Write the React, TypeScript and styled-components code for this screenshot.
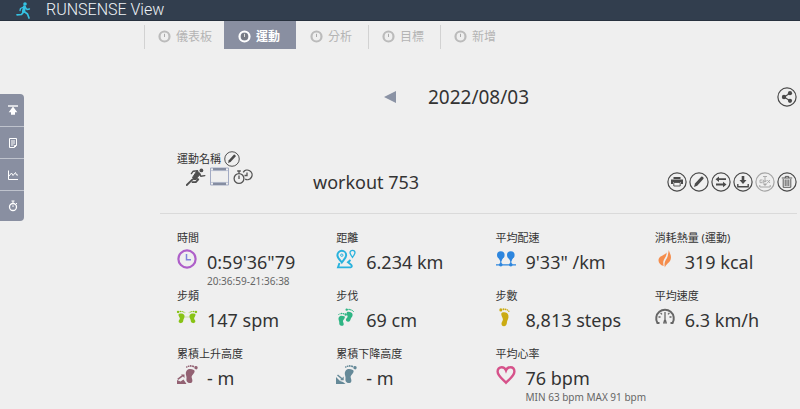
import React from 'react';
import styled, { createGlobalStyle } from 'styled-components';

const GlobalStyle = createGlobalStyle`
  * { box-sizing: border-box; }
  body {
    margin: 0;
    background: #efefef;
    color: #333;
    font-family: "Noto Sans", "Noto Sans CJK TC", sans-serif;
  }
  button { border: 0; padding: 0; background: none; font: inherit; color: inherit; cursor: pointer; }
  svg { display: block; flex: none; }
`;

const Header = styled.header`
  display: flex;
  align-items: center;
  gap: 14px;
  height: 21px;
  padding-left: 16px;
  background: #323e4e;
  border-bottom: 1px solid #27313e;
`;

const Brand = styled.span`
  font: 300 16px/20px Roboto, sans-serif;
  color: #eef2f6;
`;

const Nav = styled.nav`
  display: flex;
  height: 28px;
  margin-left: 144px;
`;

const Tab = styled.a<{ $active?: boolean; $divided?: boolean }>`
  position: relative;
  display: flex;
  align-items: center;
  gap: 5px;
  min-width: 72px;
  padding: 3px 12px 0 14px;
  font-size: 12px;
  line-height: 16px;
  font-weight: ${p => (p.$active ? 700 : 400)};
  text-decoration: none;
  white-space: nowrap;
  color: ${p => (p.$active ? '#fff' : '#b4b4b4')};
  background: ${p => (p.$active ? '#898fa1' : 'transparent')};
  &::before {
    content: '';
    display: ${p => (p.$divided ? 'block' : 'none')};
    position: absolute;
    left: 0;
    top: 4px;
    bottom: 0;
    width: 1px;
    background: #d2d2d2;
  }
`;

const Body = styled.div`
  display: flex;
  align-items: flex-start;
`;

const Sidebar = styled.aside`
  flex: none;
  display: flex;
  flex-direction: column;
  width: 24px;
  margin-top: 45px;
  background: #898fa1;
  border-radius: 0 4px 4px 0;
`;

const SideButton = styled.button`
  display: flex;
  align-items: center;
  justify-content: center;
  height: 32px;
  padding-left: 2px;
  color: #fff;
  & + & { border-top: 1px solid #bfc3cd; }
  &:last-child { height: 31px; }
`;

const Main = styled.main`
  flex: 1;
  min-width: 0;
  margin: 32px 3px 0 136px;
`;

const DateRow = styled.div`
  display: grid;
  grid-template-columns: 1fr auto 1fr;
  align-items: center;
  column-gap: 32px;
  height: 32px;
`;

const PrevButton = styled.button`
  justify-self: end;
  color: #8b93a5;
`;

const DateText = styled.time`
  font-size: 19px;
  line-height: 24px;
`;

const RoundButton = styled.button<{ $faded?: boolean }>`
  display: block;
  color: ${p => (p.$faded ? '#a5a5a5' : '#4a4a4a')};
  justify-self: end;
`;

const TitleRow = styled.div`
  display: flex;
  align-items: flex-end;
  height: 101px;
  padding: 0 0 21px 17px;
  border-bottom: 1px solid #dadada;
`;

const NameBlock = styled.div`
  display: flex;
  flex-direction: column;
  width: 136px;
  padding-bottom: 6px;
`;

const NameLabel = styled.div`
  display: flex;
  align-items: center;
  gap: 3px;
  font-size: 11px;
  line-height: 16px;
`;

const KindIcons = styled.div`
  display: flex;
  align-items: center;
  gap: 4px;
  padding-left: 9px;
`;

const WorkoutName = styled.h1`
  margin: 0;
  flex: 1;
  font-size: 18px;
  line-height: 20px;
  font-weight: 400;
`;

const Actions = styled.div`
  display: flex;
  gap: 2px;
`;

const Stats = styled.section`
  display: grid;
  grid-template-columns: repeat(4, minmax(0, 1fr));
  padding-top: 16px;
`;

const Stat = styled.div`
  height: 58px;
  padding-left: 17px;
  white-space: nowrap;
`;

const StatLabel = styled.div`
  font-size: 11px;
  line-height: 16px;
`;

const StatLine = styled.div`
  display: flex;
  gap: 10px;
`;

const StatIcon = styled.svg`
  margin-top: 3px;
  overflow: visible;
`;

const StatValue = styled.div`
  padding-top: 4px;
  font-size: 18px;
  line-height: 24px;
`;

const StatNote = styled.div`
  font-size: 10px;
  line-height: 14px;
  color: #666;
`;

const Runner = () => (
  <svg width="16" height="18" viewBox="0 0 16 18" fill="none" stroke="#35c3e3" strokeLinecap="round" strokeLinejoin="round">
    <circle cx="9" cy="3" r="1.8" fill="#35c3e3" stroke="none" />
    <path d="M8.5 6 L7.5 10.5" strokeWidth="3.2" />
    <path d="M7.5 6 L4.5 7.5 L4 9.5 M9.5 6.5 L11 8.5 L13.5 8" strokeWidth="1.3" />
    <path d="M7.5 11 L5.5 13.5 L1 13.8 M8.5 10.8 L11.5 13 L13 17" strokeWidth="1.7" />
  </svg>
);

const Dial = ({ active }: { active?: boolean }) => (
  <svg width="13" height="13" viewBox="0 0 13 13" fill="none">
    <circle cx="6.5" cy="6.5" r="5" stroke={active ? '#fff' : '#bbb'} strokeWidth="2.2" />
    {active && <circle cx="6.5" cy="6.5" r="3.5" fill="#777b84" />}
    <path d="M6.5 3.8V7" stroke={active ? '#ddd' : '#aaa'} strokeWidth="1" />
  </svg>
);

const SideIcon = ({ kind }: { kind: string }) => (
  <svg width="12" height="12" viewBox="0 0 12 12" fill="none" stroke="currentColor" strokeWidth="1">
    {kind === 'top' && (
      <>
        <path d="M1 2H11" strokeWidth="1.4" />
        <path d="M6 2.5L10.3 8.3H8V10.8H4V8.3H1.7Z" fill="currentColor" stroke="none" />
      </>
    )}
    {kind === 'note' && <path d="M2.5 1.5H9.5V8.5L7.5 10.5H2.5ZM4 4H8M4 6H8M4 8H6.5M7.5 10V8.5H9.5" />}
    {kind === 'chart' && <path d="M1.5 1.5V10.5H11M2 7L4.5 4L6 6.5L8.5 3.5L9.5 6H11" />}
    {kind === 'watch' && (
      <>
        <circle cx="6" cy="7" r="3.5" strokeWidth="1.3" />
        <path d="M6 7V5.2M4.5 1H7.5M6 1V3.5M9 3L10 4" />
      </>
    )}
  </svg>
);

const glyphs: Record<string, React.ReactNode> = {
  share: (
    <g fill="currentColor">
      <circle cx="7" cy="10" r="2.2" />
      <circle cx="13" cy="6.2" r="2.1" />
      <circle cx="13" cy="13.8" r="2.1" />
      <path d="M13 6.2L7 10L13 13.8" fill="none" stroke="currentColor" strokeWidth="1.1" />
    </g>
  ),
  print: (
    <g fill="currentColor">
      <path d="M6.5 5H13.5V7H6.5ZM4 7.5H16V12H14V10H6V12H4Z" />
      <path d="M6.8 10.5H13.2V14H6.8Z" fill="#efefef" stroke="currentColor" strokeWidth=".9" />
    </g>
  ),
  edit: (
    <path d="M5 15L6 11.5L12.2 4.8Q13 4 14 5Q15 6 14.5 6.8L8.2 13.7Z" fill="currentColor" />
  ),
  swap: (
    <g fill="currentColor">
      <path d="M4.5 7.2L8 4.5V6.3H15V8.1H8V9.9Z" />
      <path d="M15.5 12.5L12 9.8V11.6H5V13.4H12V15.2Z" />
    </g>
  ),
  download: (
    <g fill="currentColor">
      <path d="M8.7 4H11.3V8H13.5L10 12L6.5 8H8.7Z" />
      <path d="M4.8 12V14.7H15.2V12" fill="none" stroke="currentColor" strokeWidth="1.4" />
    </g>
  ),
  gpx: (
    <g fill="currentColor">
      <path d="M8 4.5H12M10 4.5V7M7.5 8H5V10.7H7.2V9.4M8.7 11V8H11V9.6H9M12.3 8L15 11M15 8L12.3 11" fill="none" stroke="currentColor" strokeWidth=".9" />
      <path d="M7.5 11.5H12.5L10 14Z" />
      <path d="M4.8 13V15H15.2V13" fill="none" stroke="currentColor" strokeWidth="1" />
    </g>
  ),
  trash: (
    <path
      d="M4.8 6H15.2M8.3 6V4.4H11.7V6M6.2 7V15.3H13.8V7M8.2 7.5V14M10 7.5V14M11.8 7.5V14"
      fill="none"
      stroke="currentColor"
      strokeWidth=".9"
    />
  ),
};

const RoundIcon = ({ name, size = 20 }: { name: string; size?: number }) => (
  <svg width={size} height={size} viewBox="0 0 20 20">
    <circle cx="10" cy="10" r="9.1" fill="none" stroke="currentColor" strokeWidth="1.2" />
    {glyphs[name]}
  </svg>
);

const Sprinter = () => (
  <svg width="20" height="18" viewBox="0 0 20 18" fill="none" stroke="#4f4f4f" strokeLinecap="round" strokeLinejoin="round">
    <circle cx="15.4" cy="2.4" r="1.9" fill="#4f4f4f" stroke="none" />
    <path d="M12.5 4L10.8 3L6.5 9.5L9 12L14 6.5Z" fill="#4f4f4f" strokeWidth="1" />
    <path d="M11.5 2.8L7.2 3.2L5.4 5.6M13.5 5.5L14.8 8.3L18.8 7.6" strokeWidth="1.4" />
    <path d="M8 10.5L5.5 12.3L.8 17M8.5 10L12.3 11.3L9.8 14.2L6.5 14.2" strokeWidth="1.8" />
  </svg>
);

const Film = () => (
  <svg width="19" height="19" viewBox="0 0 19 19">
    <path d="M.5 1H18.5V18H.5Z" fill="none" stroke="#a3abc4" strokeWidth="1" />
    <path d="M3 1H16V3.6H3ZM3 15.4H16V18H3Z" fill="#858da1" />
    <path d="M1 3.6H18M1 15.4H18" stroke="#a3abc4" strokeWidth=".6" />
  </svg>
);

const Timers = () => (
  <svg width="20" height="18" viewBox="0 0 20 18" fill="none" stroke="#555" strokeWidth="1.3">
    <circle cx="6" cy="10.5" r="4.9" />
    <path d="M6 7.5V11M4.2 3H7.8M6 3V5.5" />
    <path d="M10.2 4.3A4.8 4.8 0 1 1 12.2 11.2" />
    <path d="M14 4.5V7.5H11.5" />
  </svg>
);

const footSole =
  'M6.2 5.6C8.8 4.8 11.8 5.4 12.4 8.4C13 11.3 11.3 12.6 11 14.8C10.8 17.2 10.4 19.2 8.2 19.3C5.8 19.4 5 17.5 5.7 15.6C6.4 13.8 7.3 13 6.7 11.4C6 9.8 4.2 6.4 6.2 5.6Z';

const Foot = () => (
  <g>
    <path d={footSole} />
    <ellipse cx="4.8" cy="2.9" rx="1.5" ry="1.7" />
    <circle cx="7.5" cy="2.2" r="1" />
    <circle cx="9.6" cy="2.3" r=".9" />
    <circle cx="11.4" cy="3" r=".8" />
    <circle cx="12.8" cy="4.2" r=".7" />
  </g>
);

const statGlyphs: Record<string, React.ReactNode> = {
  time: (
    <g fill="none" stroke="#ae5fc9">
      <circle cx="10" cy="10" r="8.6" strokeWidth="2.2" />
      <path d="M9.5 5V10.8H14" stroke="#7f83dc" strokeWidth="1.5" />
    </g>
  ),
  distance: (
    <g fill="none" stroke="#29b2dd">
      <path d="M5.8 13.5C3.5 10.5 1.4 8.6 1.4 6.2A4.4 4.4 0 0 1 10.2 6.2C10.2 8.6 8 10.5 5.8 13.5Z" strokeWidth="2" />
      <circle cx="5.8" cy="6.2" r="1.2" strokeWidth="1" />
      <path d="M16.5 8.3C15 6.3 14 5 14 3.8A2.5 2.5 0 0 1 19 3.8C19 5 18 6.3 16.5 8.3Z" strokeWidth="1.3" />
      <path d="M3.5 14L2 18.4H14.5Q17 17.5 14.8 15.5L12 13.3L14.5 11" strokeWidth="1.9" />
    </g>
  ),
  pace: (
    <g fill="#2d86de">
      <circle cx="4.8" cy="6" r="3.8" />
      <circle cx="14.8" cy="6" r="3.8" />
      <path d="M2 8H7.6L5.4 12H4.2ZM12 8H17.6L15.4 12H14.2Z" />
      <path d="M4.8 9V16M14.8 9V16M0 15.8H20" stroke="#2d86de" strokeWidth="1.2" />
      <circle cx="4.8" cy="15.8" r="1.8" />
      <circle cx="14.8" cy="15.8" r="1.8" />
    </g>
  ),
  energy: (
    <g fill="#f58d4c">
      <path d="M13.8 1C14.5 4 17 6.5 15.5 11C14.3 14 11 15 9.9 18.5C9 15.5 9.7 12 11.7 9.5C13 7.5 13.2 4 13.8 1Z" />
      <path d="M11.6 3.5C11.8 8 8.8 9.5 8.3 12.5C8.1 14 8.3 15.5 8.7 17C4.5 15.7 2.5 12.5 4 9.2C5.5 6.5 9.5 6.5 11.6 3.5Z" />
    </g>
  ),
  cadence: (
    <g fill="#88c316">
      <g transform="translate(-3 3) scale(.85 .68)"><Foot /></g>
      <g transform="translate(23 3) scale(-.85 .68)"><Foot /></g>
      <path d="M8.5 10H12.5" stroke="#a9d45a" strokeWidth="1" strokeDasharray="1 1" />
    </g>
  ),
  stride: (
    <g fill="#2fb584">
      <g transform="translate(14 6) rotate(8) scale(-.85 .72)"><Foot /></g>
      <g transform="translate(7 0) rotate(8) scale(.85 .72)"><Foot /></g>
    </g>
  ),
  steps: (
    <g fill="#cbab12"><Foot /></g>
  ),
  speed: (
    <g fill="none" stroke="#666" strokeWidth="2">
      <path d="M4.5 16H2.4A8.8 8.8 0 1 1 17.6 16H15.5" />
      <path d="M10 5V13M8 15.8H12M3.5 10H5.5M14.5 10H16.5M5.6 6L7 7.4M14.4 6L13 7.4" strokeWidth="1.3" />
      <circle cx="10" cy="14.2" r="1.4" fill="#666" stroke="none" />
    </g>
  ),
  ascent: (
    <g fill="#936273">
      <g transform="translate(25 1) rotate(12) scale(-1.15 1)"><Foot /></g>
      <path d="M0 19V15L3.5 16.5L6.5 14.5L9.5 19Z" />
      <path d="M.7 14.3L6 10.3" fill="none" stroke="#936273" strokeWidth="1.5" />
      <path d="M4 9.5H7.5V13Z" />
    </g>
  ),
  descent: (
    <g fill="#658998">
      <g transform="translate(25 1) rotate(12) scale(-1.15 1)"><Foot /></g>
      <path d="M0 19V12L4 16L7 17L9.5 19Z" />
      <path d="M1.5 10L6 13.8" fill="none" stroke="#658998" strokeWidth="1.5" />
      <path d="M7.7 11.5V15.3H4Z" />
    </g>
  ),
  heart: (
    <path
      d="M10 17.8C7 14.5 1.6 11 1.6 6.6C1.6 3.8 3.4 2.2 5.6 2.2C7.6 2.2 9.2 3.4 10 5.4C10.8 3.4 12.4 2.2 14.4 2.2C16.6 2.2 18.4 3.8 18.4 6.6C18.4 11 13 14.5 10 17.8Z"
      fill="none"
      stroke="#d6528a"
      strokeWidth="2.4"
    />
  ),
};

const stats = [
  { icon: 'time', label: '時間', value: '0:59\'36"79', note: '20:36:59-21:36:38' },
  { icon: 'distance', label: '距離', value: '6.234 km' },
  { icon: 'pace', label: '平均配速', value: '9\'33" /km' },
  { icon: 'energy', label: '消耗熱量 (運動)', value: '319 kcal' },
  { icon: 'cadence', label: '步頻', value: '147 spm' },
  { icon: 'stride', label: '步伐', value: '69 cm' },
  { icon: 'steps', label: '步數', value: '8,813 steps' },
  { icon: 'speed', label: '平均速度', value: '6.3 km/h' },
  { icon: 'ascent', label: '累積上升高度', value: '- m' },
  { icon: 'descent', label: '累積下降高度', value: '- m' },
  { icon: 'heart', label: '平均心率', value: '76 bpm', note: 'MIN 63 bpm MAX 91 bpm' },
];

const tabs = [
  { text: '儀表板', divided: true },
  { text: '運動', active: true },
  { text: '分析' },
  { text: '目標', divided: true },
  { text: '新增', divided: true },
];

const sideItems = [
  { kind: 'top', label: '回到頂端' },
  { kind: 'note', label: '筆記' },
  { kind: 'chart', label: '圖表' },
  { kind: 'watch', label: '計時' },
];

const actions = [
  { name: 'print', label: '列印' },
  { name: 'edit', label: '編輯' },
  { name: 'swap', label: '切換' },
  { name: 'download', label: '下載' },
  { name: 'gpx', label: '下載 GPX', faded: true },
  { name: 'trash', label: '刪除' },
];

export default function App() {
  return (
    <>
      <GlobalStyle />
      <Header>
        <Runner />
        <Brand>RUNSENSE View</Brand>
      </Header>
      <Nav>
        {tabs.map(t => (
          <Tab key={t.text} href="#" $active={t.active} $divided={t.divided}>
            <Dial active={t.active} />
            {t.text}
          </Tab>
        ))}
      </Nav>
      <Body>
        <Sidebar>
          {sideItems.map(s => (
            <SideButton key={s.kind} aria-label={s.label}>
              <SideIcon kind={s.kind} />
            </SideButton>
          ))}
        </Sidebar>
        <Main>
          <DateRow>
            <PrevButton aria-label="前一天">
              <svg width="12" height="12" viewBox="0 0 12 12"><path d="M0 6L12 0V12Z" fill="currentColor" /></svg>
            </PrevButton>
            <DateText dateTime="2022-08-03">2022/08/03</DateText>
            <RoundButton aria-label="分享"><RoundIcon name="share" /></RoundButton>
          </DateRow>
          <TitleRow>
            <NameBlock>
              <NameLabel>
                運動名稱
                <RoundButton aria-label="編輯名稱"><RoundIcon name="edit" size={16} /></RoundButton>
              </NameLabel>
              <KindIcons>
                <Sprinter />
                <Film />
                <Timers />
              </KindIcons>
            </NameBlock>
            <WorkoutName>workout 753</WorkoutName>
            <Actions>
              {actions.map(a => (
                <RoundButton key={a.name} aria-label={a.label} $faded={a.faded}>
                  <RoundIcon name={a.name} />
                </RoundButton>
              ))}
            </Actions>
          </TitleRow>
          <Stats>
            {stats.map(s => (
              <Stat key={s.icon}>
                <StatLabel>{s.label}</StatLabel>
                <StatLine>
                  <StatIcon width="20" height="20" viewBox="0 0 20 20">{statGlyphs[s.icon]}</StatIcon>
                  <div>
                    <StatValue>{s.value}</StatValue>
                    {s.note && <StatNote>{s.note}</StatNote>}
                  </div>
                </StatLine>
              </Stat>
            ))}
          </Stats>
        </Main>
      </Body>
    </>
  );
}
